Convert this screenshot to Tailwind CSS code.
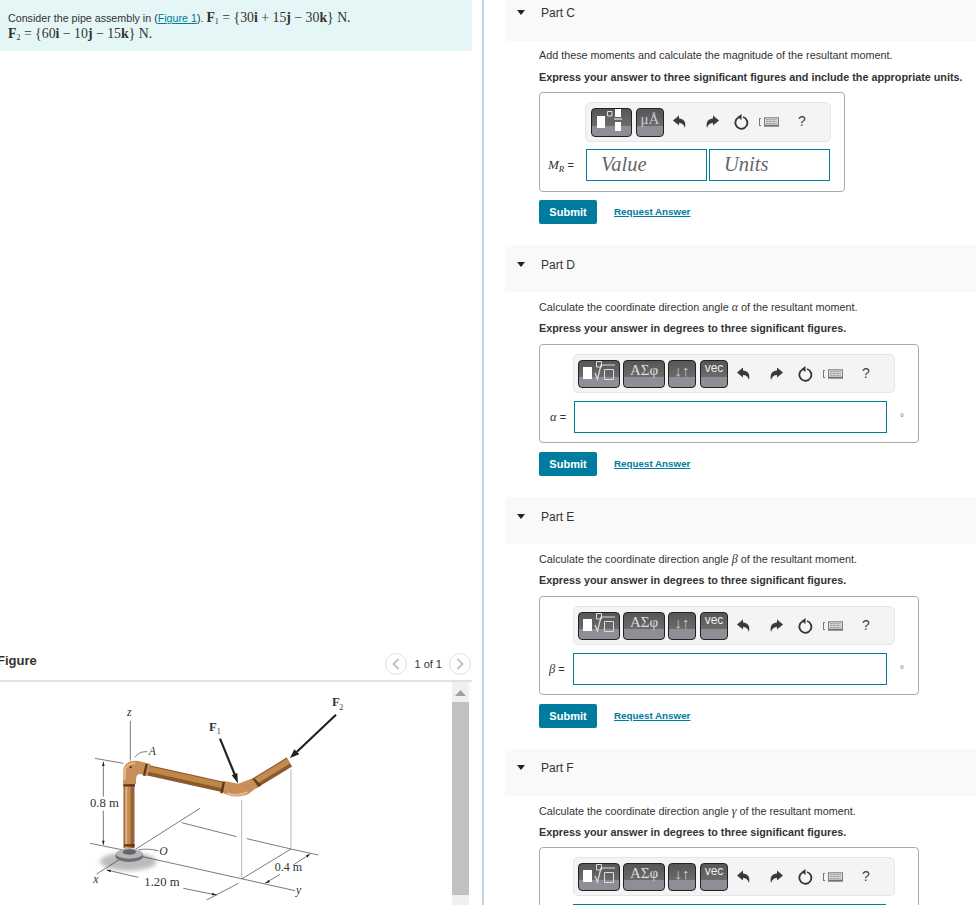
<!DOCTYPE html>
<html lang="en">
<head>
    <meta charset="UTF-8" />
    <title>Pipe assembly</title>
    <script src="https://cdn.jsdelivr.net/npm/@tailwindcss/browser@4"></script>
</head>
<body class="bg-white">

<!-- shared toolbar icons -->
<svg class="hidden">
    <symbol id="undo" viewBox="0 0 16 16"><path d="M1 6.5 7 1.5V4.5C11.5 4.5 14.5 8 13 14 12 10.5 10 9 7 9V11.5Z" fill="#3a3a3a"/></symbol>
    <symbol id="redo" viewBox="0 0 16 16"><path d="M15 6.5 9 1.5V4.5C4.5 4.5 1.5 8 3 14 4 10.5 6 9 9 9V11.5Z" fill="#3a3a3a"/></symbol>
    <symbol id="reset" viewBox="0 0 16 16"><path d="M5.5 3.5A6 6 0 1 0 10 3" fill="none" stroke="#333" stroke-width="1.8"/><path d="M8.5 0 8.5 6 4.5 3Z" fill="#333"/></symbol>
    <symbol id="keyboard" viewBox="0 0 16 10"><rect x="0.5" y="0.5" width="15" height="9" fill="#ddd" stroke="#777"/><path d="M2 2.5H14M2 4.5H14M2 6.5H14" stroke="#888" stroke-dasharray="1 .5"/><path d="M1 8.5H15" stroke="#555"/></symbol>
    <symbol id="mathbtn" viewBox="0 0 40 26"><path d="M4 6H13V18H4Z" fill="#fff"/><path d="M17.5 0.5H22.5V6H17.5ZM25.5 8.5H34.5V18.5H25.5Z" fill="none" stroke="#ddd"/><path d="M16 12 18.5 18 22 4H36" fill="none" stroke="#ddd" stroke-width="1.2"/></symbol>
</svg>

<div class="flex h-[905px] w-[976px] overflow-hidden font-['Liberation_Sans',Arial,sans-serif] text-[#333]">

    <!-- left column -->
    <div class="w-[484px] shrink-0 flex flex-col border-r-2 border-[#c3d3e3] pr-[10px]">
        <div class="h-[52px] w-[472px] bg-[#e5f6f6] pl-[8px] pt-[10px] text-[10.7px] leading-[15px]">
            <p>Consider the pipe assembly in (<a class="text-[#007c9e] underline">Figure 1</a>). <span class="font-['Liberation_Serif',serif] text-[13.8px]"><b>F</b><sub class="text-[8px]">1</sub> = {30<b>i</b> + 15<b>j</b> − 30<b>k</b>} N.</span></p>
            <p class="font-['Liberation_Serif',serif] text-[13.8px]"><b>F</b><sub class="text-[8px]">2</sub> = {60<b>i</b> − 10<b>j</b> − 15<b>k</b>} N.</p>
        </div>

        <div class="mt-[595px] w-[472px] h-[36px] flex items-center border-b-2 border-[#e2e2e2] pt-[2px]">
            <h2 class="-ml-[3px] -mt-[6px] text-[13px] font-bold text-[#333]">Figure</h2>
            <div class="ml-auto flex items-center">
                <span class="flex h-[22px] w-[22px] items-center justify-center rounded-full border border-[#e0e0e0]">
                    <svg width="8" height="12" viewBox="0 0 8 12"><path d="M6.5 1 1.5 6 6.5 11" fill="none" stroke="#c4c4c4" stroke-width="2"/></svg>
                </span>
                <span class="mx-[7px] text-[11px]">1 of 1</span>
                <span class="mr-[1px] flex h-[22px] w-[22px] items-center justify-center rounded-full border border-[#e0e0e0]">
                    <svg width="8" height="12" viewBox="0 0 8 12"><path d="M1.5 1 6.5 6 1.5 11" fill="none" stroke="#c4c4c4" stroke-width="2"/></svg>
                </span>
            </div>
        </div>

        <div class="flex w-[469px] h-[224px]">
            <div class="w-[452px] pl-[60px] -mt-[2px]">
                <svg width="300" height="225" viewBox="0 0 900 675" font-family="Liberation Serif" fill="#333">
                    <defs>
                        <filter id="soft"><feGaussianBlur stdDeviation="7"/></filter>
                    </defs>
                    <ellipse cx="205" cy="545" rx="85" ry="27" fill="#bbb" filter="url(#soft)"/>
                    <g fill="none" stroke="#222" stroke-width="1.8">
                        <path d="M211 122V242M105 235 190 250M90 490 190 510M130 245V350M130 392V495"/>
                        <path d="M110 582 420 385M225 525 705 632M365 428 530 470M560 476 693 507M693 507 775 525M545 597 693 507"/>
                        <path d="M140 570 235 592M370 625 470 645M440 660 535 610M750 522 700 555M660 583 615 610"/>
                        <path d="M225 232C235 218 245 215 262 215M235 510C255 505 275 508 295 512"/>
                    </g>
                    <path d="M545 360V595M693 268V505" stroke="#aaa" stroke-width="2.5" fill="none"/>
                    <path d="M130 245 126 258H134ZM130 495 126 482H134ZM140 570 153 569 151 577ZM470 645 457 638 455 646ZM615 610 626 600 630 607ZM750 522 738 526 742 533Z" fill="#222"/>

                    <!-- flange -->
                    <ellipse cx="208" cy="528" rx="42" ry="18" fill="#6d7175"/>
                    <ellipse cx="208" cy="521" rx="40" ry="15" fill="#b2b5b7"/>
                    <ellipse cx="208" cy="516" rx="20" ry="8" fill="#62656a"/>

                    <!-- pipe -->
                    <g fill="none">
                        <path d="M207 505V300" stroke="#96622f" stroke-width="33"/>
                        <path d="M203 505V300" stroke="#c48a50" stroke-width="18"/>
                        <path d="M199 505V300" stroke="#e0b58a" stroke-width="5"/>
                        <path d="M255 269 495 322" stroke="#8a5a2c" stroke-width="31"/>
                        <path d="M255 265 495 318" stroke="#c08648" stroke-width="17"/>
                        <path d="M580 312 688 246" stroke="#8a5a2c" stroke-width="31"/>
                        <path d="M578 309 686 243" stroke="#c48a50" stroke-width="17"/>
                    </g>
                    <path d="M190 312V275C190 250 210 240 235 243L272 252 262 288 240 282C232 282 228 288 228 300V312Z" fill="#c98f58"/>
                    <path d="M195 300V276C195 258 208 250 226 249" fill="none" stroke="#e6bd92" stroke-width="5"/>
                    <path d="M494 303 535 311 572 297 594 320 565 342C545 352 510 352 490 340Z" fill="#c98f58"/>
                    <path d="M500 340C520 346 545 346 562 336" fill="none" stroke="#e6bd92" stroke-width="5"/>
                    <path d="M190 316H225M192 496H224M260 252 252 287M492 305 484 340M582 298 600 318" fill="none" stroke="#57391d" stroke-width="7"/>
                    <circle cx="212" cy="262" r="3" fill="#222"/>

                    <!-- forces -->
                    <path d="M480 176 526 288" stroke="#222" stroke-width="6.5"/>
                    <path d="M534 310 515 286 532 279Z" fill="#222"/>
                    <path d="M828 104 710 216" stroke="#222" stroke-width="6.5"/>
                    <path d="M690 234 703 208 718 223Z" fill="#222"/>

                    <g font-size="38">
                        <text x="90" y="381">0.8 m</text>
                        <text x="253" y="617">1.20 m</text>
                    </g>
                    <text x="644" y="573" font-size="36">0.4 m</text>
                    <g font-size="35" font-style="italic">
                        <text x="201" y="108">z</text>
                        <text x="266" y="224">A</text>
                        <text x="298" y="524">O</text>
                        <text x="100" y="608">x</text>
                        <text x="708" y="642">y</text>
                    </g>
                    <g font-size="38" font-weight="bold">
                        <text x="447" y="152">F</text>
                        <text x="816" y="79">F</text>
                    </g>
                    <g font-size="24">
                        <text x="470" y="161">1</text>
                        <text x="838" y="90">2</text>
                    </g>
                </svg>
            </div>
            <div class="w-[17px] h-full bg-[#f0f0f0] flex flex-col items-center">
                <svg class="mt-[8px]" width="11" height="6" viewBox="0 0 11 6"><path d="M5.5 0 11 6H0Z" fill="#a0a0a0"/></svg>
                <div class="mt-[6px] w-full h-[193px] bg-[#c1c1c1]"></div>
            </div>
        </div>
    </div>

    <!-- right column -->
    <div class="flex-1 pl-[21px] -mt-[6px]">

        <!-- Part C -->
        <section class="h-[251px]">
            <div class="h-[47px] bg-[#f9f9f9] flex items-start pt-[12px]">
                <svg class="ml-[12px] mt-[4px]" width="8" height="5" viewBox="0 0 8 5"><path d="M0 0H8L4 5Z" fill="#222"/></svg>
                <h3 class="ml-[16px] text-[12px] leading-[15px]">Part C</h3>
            </div>
            <div class="pl-[34px]">
                <p class="mt-[6px] text-[10.8px] leading-[16px]">Add these moments and calculate the magnitude of the resultant moment.</p>
                <p class="mt-[6px] text-[10.8px] leading-[16px] font-bold">Express your answer to three significant figures and include the appropriate units.</p>
                <div class="mt-[7px] h-[100px] w-[306px] rounded-[4px] border border-[#aaa] pl-[45px] pt-[9px]">
                    <div class="flex h-[40px] w-[246px] items-center rounded-[5px] border border-[#e5e5e5] bg-[#f4f4f4] pl-[5px]">
                        <div class="relative h-[29px] w-[41px] rounded-[4px] border border-[#222] bg-[linear-gradient(#565656,#6b6b6b_62%,#8e8e96_62%)]">
                            <svg class="absolute left-0 top-0" width="39" height="27" viewBox="0 0 39 27"><path d="M5 7H13V19H5ZM23 0H29V8H23ZM23 13H29V22H23Z" fill="#fff"/><path d="M15.5 2.5H20V7H15.5Z" fill="none" stroke="#ddd"/><path d="M22 10H30" stroke="#ccc" stroke-width="1.5"/></svg>
                        </div>
                        <div class="ml-[4px] h-[29px] w-[28px] rounded-[4px] border border-[#222] bg-[linear-gradient(#565656,#6b6b6b_62%,#8e8e96_62%)] text-center font-['Liberation_Serif',serif] text-[15px] leading-[20px] text-[#ccc]">μÅ</div>
                        <svg class="mx-[8px]" width="16" height="16"><use href="#undo"/></svg>
                        <svg class="mx-[8px]" width="16" height="16"><use href="#redo"/></svg>
                        <svg class="mx-[5px]" width="16" height="16"><use href="#reset"/></svg>
                        <span class="ml-[5px] h-[8px] w-[2px] border-l border-y border-[#777]"></span>
                        <svg class="ml-[3px]" width="15" height="10"><use href="#keyboard"/></svg>
                        <span class="-mt-[2px] ml-[19px] text-[14px] text-[#444]">?</span>
                    </div>
                    <div class="-ml-[37px] mt-[7px] flex items-center">
                        <span class="w-[38px] whitespace-nowrap font-['Liberation_Serif',serif] text-[13px]"><i>M<sub class="text-[9px]">R</sub></i> <span class="font-['Liberation_Sans',sans-serif] text-[11px]">=</span></span>
                        <div class="h-[32px] w-[121px] border border-[#007c9e] pl-[14px] font-['Liberation_Serif',serif] text-[20.5px] italic leading-[28px] text-[#666]">Value</div>
                        <div class="ml-[2px] h-[32px] w-[121px] border border-[#007c9e] pl-[14px] font-['Liberation_Serif',serif] text-[20.5px] italic leading-[28px] text-[#666]">Units</div>
                    </div>
                </div>
                <div class="mt-[8px] flex items-center">
                    <span class="flex h-[24px] w-[58px] items-center justify-center rounded-[2px] bg-[#007c9e] text-[11px] font-bold text-white">Submit</span>
                    <a class="ml-[17px] text-[9.8px] font-bold text-[#007c9e] underline">Request Answer</a>
                </div>
            </div>
        </section>

        <!-- Part D -->
        <section class="h-[252px]">
            <div class="h-[47px] bg-[#f9f9f9] flex items-start pt-[13px]">
                <svg class="ml-[12px] mt-[4px]" width="8" height="5" viewBox="0 0 8 5"><path d="M0 0H8L4 5Z" fill="#222"/></svg>
                <h3 class="ml-[16px] text-[12px] leading-[15px]">Part D</h3>
            </div>
            <div class="pl-[34px]">
                <p class="mt-[7px] text-[10.8px] leading-[16px]">Calculate the coordinate direction angle <i class="font-['Liberation_Serif',serif] text-[12px]">α</i> of the resultant moment.</p>
                <p class="mt-[5px] text-[10.8px] leading-[16px] font-bold">Express your answer in degrees to three significant figures.</p>
                <div class="mt-[8px] h-[99px] w-[380px] rounded-[4px] border border-[#aaa] pl-[33px] pt-[9px]">
                    <div class="flex h-[39px] w-[322px] items-center rounded-[5px] border border-[#e5e5e5] bg-[#f4f4f4] pl-[4px]">
                        <div class="relative h-[28px] w-[42px] rounded-[4px] border border-[#222] bg-[linear-gradient(#565656,#6b6b6b_62%,#8e8e96_62%)]">
                            <svg class="absolute left-0 top-0" width="40" height="26"><use href="#mathbtn"/></svg>
                        </div>
                        <div class="ml-[3px] h-[28px] w-[42px] rounded-[4px] border border-[#222] bg-[linear-gradient(#565656,#6b6b6b_62%,#8e8e96_62%)] text-center font-['Liberation_Serif',serif] text-[15px] leading-[19px] text-[#ddd]">ΑΣφ</div>
                        <div class="ml-[3px] h-[28px] w-[28px] rounded-[4px] border border-[#222] bg-[linear-gradient(#565656,#6b6b6b_62%,#8e8e96_62%)] text-center text-[15px] leading-[19px] text-[#ccc]">↓↑</div>
                        <div class="ml-[4px] h-[28px] w-[28px] rounded-[4px] border border-[#222] bg-[linear-gradient(#565656,#6b6b6b_62%,#8e8e96_62%)] text-center text-[12px] leading-[15px] text-[#eee]">vec</div>
                        <svg class="mx-[8px]" width="16" height="16"><use href="#undo"/></svg>
                        <svg class="mx-[8px]" width="16" height="16"><use href="#redo"/></svg>
                        <svg class="mx-[5px]" width="16" height="16"><use href="#reset"/></svg>
                        <span class="ml-[5px] h-[8px] w-[2px] border-l border-y border-[#777]"></span>
                        <svg class="ml-[3px]" width="15" height="10"><use href="#keyboard"/></svg>
                        <span class="ml-[19px] text-[14px] text-[#444]">?</span>
                    </div>
                    <div class="-ml-[33px] mt-[8px] flex items-center">
                        <span class="ml-[10px] w-[24px] whitespace-nowrap font-['Liberation_Serif',serif] text-[12.5px]"><i>α</i> <span class="font-['Liberation_Sans',sans-serif] text-[11px]">=</span></span>
                        <div class="h-[32px] w-[313px] border border-[#007c9e]"></div>
                        <span class="ml-[13px] text-[10px] text-[#777]">°</span>
                    </div>
                </div>
                <div class="mt-[9px] flex items-center">
                    <span class="flex h-[24px] w-[58px] items-center justify-center rounded-[2px] bg-[#007c9e] text-[11px] font-bold text-white">Submit</span>
                    <a class="ml-[17px] text-[9.8px] font-bold text-[#007c9e] underline">Request Answer</a>
                </div>
            </div>
        </section>

        <!-- Part E -->
        <section class="h-[252px]">
            <div class="h-[47px] bg-[#f9f9f9] flex items-start pt-[13px]">
                <svg class="ml-[12px] mt-[4px]" width="8" height="5" viewBox="0 0 8 5"><path d="M0 0H8L4 5Z" fill="#222"/></svg>
                <h3 class="ml-[16px] text-[12px] leading-[15px]">Part E</h3>
            </div>
            <div class="pl-[34px]">
                <p class="mt-[7px] text-[10.8px] leading-[16px]">Calculate the coordinate direction angle <i class="font-['Liberation_Serif',serif] text-[12px]">β</i> of the resultant moment.</p>
                <p class="mt-[5px] text-[10.8px] leading-[16px] font-bold">Express your answer in degrees to three significant figures.</p>
                <div class="mt-[8px] h-[99px] w-[380px] rounded-[4px] border border-[#aaa] pl-[33px] pt-[9px]">
                    <div class="flex h-[39px] w-[322px] items-center rounded-[5px] border border-[#e5e5e5] bg-[#f4f4f4] pl-[4px]">
                        <div class="relative h-[28px] w-[42px] rounded-[4px] border border-[#222] bg-[linear-gradient(#565656,#6b6b6b_62%,#8e8e96_62%)]">
                            <svg class="absolute left-0 top-0" width="40" height="26"><use href="#mathbtn"/></svg>
                        </div>
                        <div class="ml-[3px] h-[28px] w-[42px] rounded-[4px] border border-[#222] bg-[linear-gradient(#565656,#6b6b6b_62%,#8e8e96_62%)] text-center font-['Liberation_Serif',serif] text-[15px] leading-[19px] text-[#ddd]">ΑΣφ</div>
                        <div class="ml-[3px] h-[28px] w-[28px] rounded-[4px] border border-[#222] bg-[linear-gradient(#565656,#6b6b6b_62%,#8e8e96_62%)] text-center text-[15px] leading-[19px] text-[#ccc]">↓↑</div>
                        <div class="ml-[4px] h-[28px] w-[28px] rounded-[4px] border border-[#222] bg-[linear-gradient(#565656,#6b6b6b_62%,#8e8e96_62%)] text-center text-[12px] leading-[15px] text-[#eee]">vec</div>
                        <svg class="mx-[8px]" width="16" height="16"><use href="#undo"/></svg>
                        <svg class="mx-[8px]" width="16" height="16"><use href="#redo"/></svg>
                        <svg class="mx-[5px]" width="16" height="16"><use href="#reset"/></svg>
                        <span class="ml-[5px] h-[8px] w-[2px] border-l border-y border-[#777]"></span>
                        <svg class="ml-[3px]" width="15" height="10"><use href="#keyboard"/></svg>
                        <span class="ml-[19px] text-[14px] text-[#444]">?</span>
                    </div>
                    <div class="-ml-[33px] mt-[8px] flex items-center">
                        <span class="ml-[9px] w-[24px] whitespace-nowrap font-['Liberation_Serif',serif] text-[12.5px]"><i>β</i> <span class="font-['Liberation_Sans',sans-serif] text-[11px]">=</span></span>
                        <div class="h-[32px] w-[314px] border border-[#007c9e]"></div>
                        <span class="ml-[13px] text-[10px] text-[#777]">°</span>
                    </div>
                </div>
                <div class="mt-[9px] flex items-center">
                    <span class="flex h-[24px] w-[58px] items-center justify-center rounded-[2px] bg-[#007c9e] text-[11px] font-bold text-white">Submit</span>
                    <a class="ml-[17px] text-[9.8px] font-bold text-[#007c9e] underline">Request Answer</a>
                </div>
            </div>
        </section>

        <!-- Part F -->
        <section class="h-[252px]">
            <div class="h-[47px] bg-[#f9f9f9] flex items-start pt-[12px]">
                <svg class="ml-[12px] mt-[4px]" width="8" height="5" viewBox="0 0 8 5"><path d="M0 0H8L4 5Z" fill="#222"/></svg>
                <h3 class="ml-[16px] text-[12px] leading-[15px]">Part F</h3>
            </div>
            <div class="pl-[34px]">
                <p class="mt-[7px] text-[10.8px] leading-[16px]">Calculate the coordinate direction angle <i class="font-['Liberation_Serif',serif] text-[12px]">γ</i> of the resultant moment.</p>
                <p class="mt-[5px] text-[10.8px] leading-[16px] font-bold">Express your answer in degrees to three significant figures.</p>
                <div class="mt-[7px] h-[99px] w-[380px] rounded-[4px] border border-[#aaa] pl-[33px] pt-[9px]">
                    <div class="flex h-[39px] w-[322px] items-center rounded-[5px] border border-[#e5e5e5] bg-[#f4f4f4] pl-[4px]">
                        <div class="relative h-[28px] w-[42px] rounded-[4px] border border-[#222] bg-[linear-gradient(#565656,#6b6b6b_62%,#8e8e96_62%)]">
                            <svg class="absolute left-0 top-0" width="40" height="26"><use href="#mathbtn"/></svg>
                        </div>
                        <div class="ml-[3px] h-[28px] w-[42px] rounded-[4px] border border-[#222] bg-[linear-gradient(#565656,#6b6b6b_62%,#8e8e96_62%)] text-center font-['Liberation_Serif',serif] text-[15px] leading-[19px] text-[#ddd]">ΑΣφ</div>
                        <div class="ml-[3px] h-[28px] w-[28px] rounded-[4px] border border-[#222] bg-[linear-gradient(#565656,#6b6b6b_62%,#8e8e96_62%)] text-center text-[15px] leading-[19px] text-[#ccc]">↓↑</div>
                        <div class="ml-[4px] h-[28px] w-[28px] rounded-[4px] border border-[#222] bg-[linear-gradient(#565656,#6b6b6b_62%,#8e8e96_62%)] text-center text-[12px] leading-[15px] text-[#eee]">vec</div>
                        <svg class="mx-[8px]" width="16" height="16"><use href="#undo"/></svg>
                        <svg class="mx-[8px]" width="16" height="16"><use href="#redo"/></svg>
                        <svg class="mx-[5px]" width="16" height="16"><use href="#reset"/></svg>
                        <span class="ml-[5px] h-[8px] w-[2px] border-l border-y border-[#777]"></span>
                        <svg class="ml-[3px]" width="15" height="10"><use href="#keyboard"/></svg>
                        <span class="ml-[19px] text-[14px] text-[#444]">?</span>
                    </div>
                    <div class="-ml-[33px] mt-[8px] h-[32px] border-0 pl-[33px]">
                        <div class="h-[32px] w-[313px] border border-[#007c9e]"></div>
                    </div>
                </div>
            </div>
        </section>
    </div>
</div>
</body>
</html>
